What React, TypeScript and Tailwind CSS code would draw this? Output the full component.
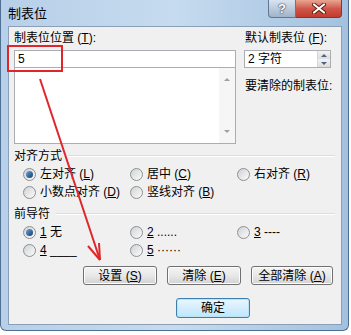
import React from "react";

function Radio({ checked }: { checked?: boolean }) {
  return (
    <span className="flex h-[13px] w-[13px] shrink-0 items-center justify-center rounded-full border border-[#8e8f8f] bg-gradient-to-br from-[#cfd3d6] to-[#fbfbfb]">
      {checked && (
        <span className="h-[7px] w-[7px] rounded-full bg-gradient-to-br from-[#6ea6d8] to-[#0d3d72]" />
      )}
    </span>
  );
}

function Option({ checked, children }: { checked?: boolean; children: React.ReactNode }) {
  return (
    <div className="flex h-[18px] items-center gap-[4px]">
      <Radio checked={checked} />
      <span className="whitespace-pre">{children}</span>
    </div>
  );
}

function Btn({ w, children, primary }: { w: string; children: React.ReactNode; primary?: boolean }) {
  return (
    <div
      className={
        primary
          ? `flex h-[20px] ${w} items-center justify-center rounded-[3px] border border-[#3c7fb1] bg-gradient-to-b from-[#eaf6fd] to-[#bee6fd] shadow-[inset_0_0_0_1px_#b9e4f8]`
          : `flex h-[19px] ${w} items-center justify-center rounded-[3px] border border-[#707070] bg-gradient-to-b from-[#f4f4f4] via-[#e8e8e8] to-[#d2d2d2] shadow-[inset_0_0_0_1px_#fcfcfc]`
      }
    >
      {children}
    </div>
  );
}

function GroupLabel({ children }: { children: React.ReactNode }) {
  return (
    <div className="flex h-[14px] items-center gap-[6px] pl-[5px] pr-[6px]">
      <span>{children}</span>
      <span className="h-[2px] flex-1 border-t border-b border-t-[#d5dfe5] border-b-white" />
    </div>
  );
}

export default function App() {
  return (
    <div className="relative h-[335px] w-[351px] overflow-hidden bg-white text-[12px] leading-[14px] text-black font-['Liberation_Sans','Noto_Sans_CJK_SC',sans-serif]">
      <div className="flex h-[331px] w-[349px] flex-col rounded-b-[6px] border-x border-b border-[#4f6f90] bg-gradient-to-r from-[#b7cfe8] via-[#c6dbef] to-[#a3c1df] pl-[7px] pr-[6px]">
        {/* title bar */}
        <div className="flex h-[26px] items-start justify-between">
          <span className="pt-[7px] text-[13px] leading-[14px]">制表位</span>
          <div className="flex">
            <div className="flex h-[18px] w-[28px] items-center justify-center rounded-bl-[4px] border border-t-0 border-[#5f7894] bg-gradient-to-b from-[#d9e4ef] via-[#bccbdc] to-[#9fb3c9] text-[13px] font-bold leading-none text-white [text-shadow:0_0_1px_#1d3550,0_0_2px_#1d3550]">
              ?
            </div>
            <div className="flex h-[18px] w-[46px] items-center justify-center rounded-br-[4px] border border-l-0 border-t-0 border-[#7a3a36] bg-gradient-to-b from-[#e8a593] via-[#d0574b] to-[#c23a2c]">
              <svg width="14" height="11" viewBox="0 0 14 11">
                <path d="M2 1.5 L12 9.5 M12 1.5 L2 9.5" stroke="#5a1c16" strokeWidth="4" strokeLinecap="round" />
                <path d="M2 1.5 L12 9.5 M12 1.5 L2 9.5" stroke="#ffffff" strokeWidth="2.2" strokeLinecap="round" />
              </svg>
            </div>
          </div>
        </div>

        {/* content */}
        <div className="mb-[5px] flex-1 border border-[#8aa0b8] bg-[#f0f0f0]">
          <div className="flex pt-[4px]">
            <div className="w-[227px] pl-[5px]">
              <div className="h-[14px] whitespace-nowrap">
                制表位位置 (<u>T</u>):
              </div>
              <div className="mt-[5px] flex h-[18px] items-center border border-[#abadb3] bg-white pl-[3px]">5</div>
              <div className="flex h-[76px] justify-end border border-t-0 border-[#abadb3] bg-white">
                <div className="flex w-[16px] flex-col items-center justify-between bg-[#f6f6f6] py-[10px]">
                  <span className="h-0 w-0 border-x-[3px] border-b-[3px] border-x-transparent border-b-[#a0a0a0]" />
                  <span className="h-0 w-0 border-x-[3px] border-t-[3px] border-x-transparent border-t-[#a0a0a0]" />
                </div>
              </div>
            </div>
            <div className="ml-[8px] w-[87px]">
              <div className="h-[14px] whitespace-nowrap pl-[1px]">
                默认制表位 (<u>F</u>):
              </div>
              <div className="mt-[5px] flex h-[18px] items-center justify-between border border-[#abadb3] bg-white pl-[3px]">
                <span>2 字符</span>
                <div className="flex h-full w-[13px] flex-col border-l border-[#d6d6d6]">
                  <div className="flex flex-1 items-center justify-center bg-gradient-to-b from-[#f3f3f3] to-[#dcdcdc]">
                    <span className="h-0 w-0 border-x-[3px] border-b-[3px] border-x-transparent border-b-[#4d6185]" />
                  </div>
                  <div className="flex flex-1 items-center justify-center bg-gradient-to-b from-[#f3f3f3] to-[#dcdcdc]">
                    <span className="h-0 w-0 border-x-[3px] border-t-[3px] border-x-transparent border-t-[#4d6185]" />
                  </div>
                </div>
              </div>
              <div className="mt-[11px] h-[14px] whitespace-nowrap pl-[1px]">要清除的制表位:</div>
            </div>
          </div>

          <div className="mt-[5px]">
            <GroupLabel>对齐方式</GroupLabel>
            <div className="mt-[2px] grid grid-cols-[107px_107px_107px] pl-[14px]">
              <Option checked>
                左对齐 (<u>L</u>)
              </Option>
              <Option>
                居中 (<u>C</u>)
              </Option>
              <Option>
                右对齐 (<u>R</u>)
              </Option>
              <Option>
                小数点对齐 (<u>D</u>)
              </Option>
              <Option>
                竖线对齐 (<u>B</u>)
              </Option>
            </div>
          </div>

          <div className="mt-[6px]">
            <GroupLabel>前导符</GroupLabel>
            <div className="mt-[2px] grid grid-cols-[107px_107px_107px] pl-[14px]">
              <Option checked>
                <u>1</u> 无
              </Option>
              <Option>
                <u>2</u> ......
              </Option>
              <Option>
                <u>3</u> ----
              </Option>
              <Option>
                <u>4</u> ____
              </Option>
              <Option>
                <u>5</u> ······
              </Option>
            </div>
          </div>

          <div className="mt-[7px] flex gap-[10px] pl-[74px]">
            <Btn w="w-[74px]">
              设置 (<u>S</u>)
            </Btn>
            <Btn w="w-[74px]">
              清除 (<u>E</u>)
            </Btn>
            <Btn w="w-[82px]">
              全部清除 (<u>A</u>)
            </Btn>
          </div>
          <div className="mt-[13px] pl-[167px]">
            <Btn w="w-[74px]" primary>
              确定
            </Btn>
          </div>
        </div>
      </div>

      {/* annotation: red box and arrow */}
      <div className="absolute left-[7px] top-[45px] h-[27px] w-[56px] border-2 border-[#e0262a]" />
      <svg className="pointer-events-none absolute left-0 top-0" width="351" height="335">
        <line x1="40" y1="79" x2="100" y2="260" stroke="#e0262a" strokeWidth="2" />
        <line x1="100" y1="260" x2="99" y2="243" stroke="#e0262a" strokeWidth="2" />
        <line x1="100" y1="260" x2="88" y2="246" stroke="#e0262a" strokeWidth="2" />
      </svg>
    </div>
  );
}
